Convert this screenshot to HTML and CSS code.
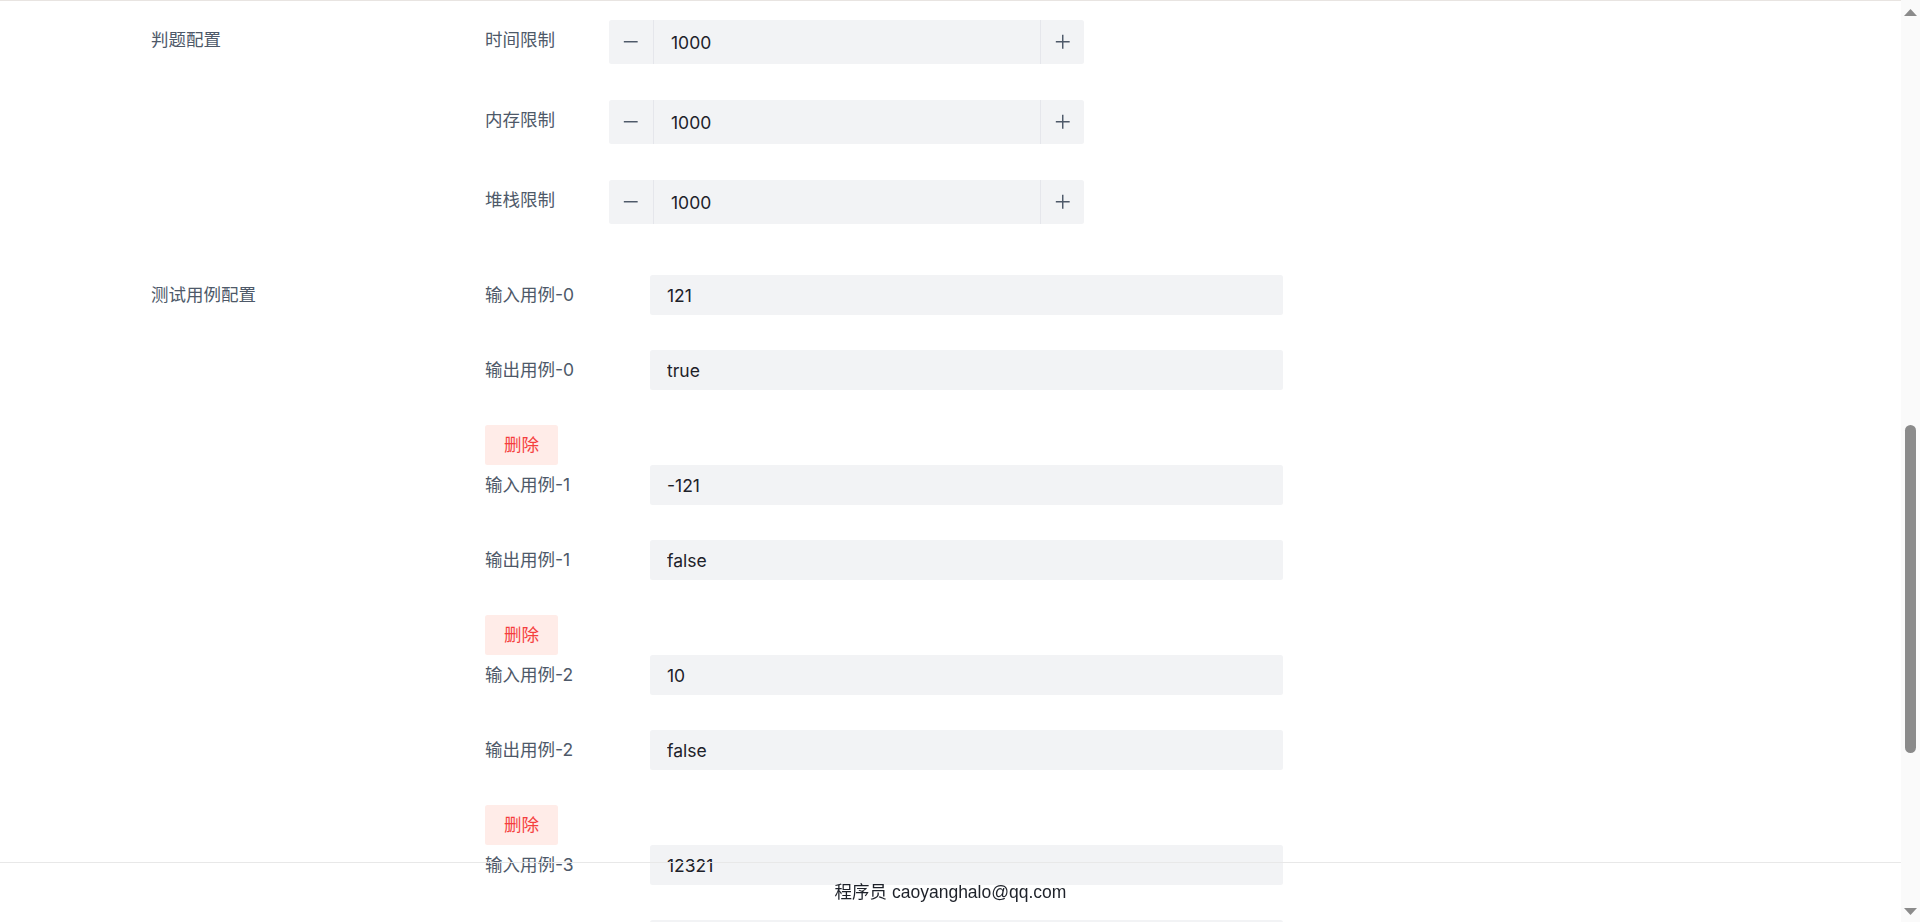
FILE: index.html
```html
<!DOCTYPE html>
<html lang="zh-CN">
<head>
<meta charset="utf-8">
<title>创建题目</title>
<link rel="stylesheet" href="styles.css">
</head>
<body>
<div class="app">
  <main class="main">
    <form class="form">
      <div class="rule"></div>

      <section class="group judge">
        <div class="group-label">判题配置</div>
        <div class="group-body">
          <div class="sub-item">
            <label class="sub-label">时间限制</label>
            <div class="input-number">
              <button type="button" class="step minus"><svg viewBox="0 0 48 48" class="icon"><path d="M5 24h38"/></svg></button>
              <input type="text" value="1000">
              <button type="button" class="step plus"><svg viewBox="0 0 48 48" class="icon"><path d="M5 24h38M24 5v38"/></svg></button>
            </div>
          </div>
          <div class="sub-item">
            <label class="sub-label">内存限制</label>
            <div class="input-number">
              <button type="button" class="step minus"><svg viewBox="0 0 48 48" class="icon"><path d="M5 24h38"/></svg></button>
              <input type="text" value="1000">
              <button type="button" class="step plus"><svg viewBox="0 0 48 48" class="icon"><path d="M5 24h38M24 5v38"/></svg></button>
            </div>
          </div>
          <div class="sub-item">
            <label class="sub-label">堆栈限制</label>
            <div class="input-number">
              <button type="button" class="step minus"><svg viewBox="0 0 48 48" class="icon"><path d="M5 24h38"/></svg></button>
              <input type="text" value="1000">
              <button type="button" class="step plus"><svg viewBox="0 0 48 48" class="icon"><path d="M5 24h38M24 5v38"/></svg></button>
            </div>
          </div>
        </div>
      </section>

      <section class="group cases">
        <div class="group-label">测试用例配置</div>
        <div class="group-body">
          <div class="sub-item">
            <label class="sub-label">输入用例-0</label>
            <div class="input"><input type="text" value="121"></div>
          </div>
          <div class="sub-item">
            <label class="sub-label">输出用例-0</label>
            <div class="input"><input type="text" value="true"></div>
          </div>
          <div class="sub-item delete-row"><button type="button" class="btn btn-danger">删除</button></div>

          <div class="sub-item">
            <label class="sub-label">输入用例-1</label>
            <div class="input"><input type="text" value="-121"></div>
          </div>
          <div class="sub-item">
            <label class="sub-label">输出用例-1</label>
            <div class="input"><input type="text" value="false"></div>
          </div>
          <div class="sub-item delete-row"><button type="button" class="btn btn-danger">删除</button></div>

          <div class="sub-item">
            <label class="sub-label">输入用例-2</label>
            <div class="input"><input type="text" value="10"></div>
          </div>
          <div class="sub-item">
            <label class="sub-label">输出用例-2</label>
            <div class="input"><input type="text" value="false"></div>
          </div>
          <div class="sub-item delete-row"><button type="button" class="btn btn-danger">删除</button></div>

          <div class="sub-item">
            <label class="sub-label">输入用例-3</label>
            <div class="input"><input type="text" value="12321"></div>
          </div>
          <div class="sub-item last-visible">
            <div class="input input-peek"></div>
          </div>
        </div>
      </section>
    </form>
  </main>

  <footer class="footer">程序员 caoyanghalo@qq.com</footer>

  <div class="scrollbar" aria-hidden="true">
    <div class="sb-button sb-up"><svg class="sb-arrow" width="13" height="7" viewBox="0 0 13 7"><path d="M6.5 0L13 7H0z"/></svg></div>
    <div class="sb-track"><div class="sb-thumb"></div></div>
    <div class="sb-button sb-down"><svg class="sb-arrow" width="13" height="7" viewBox="0 0 13 7"><path d="M0 0H13L6.5 7z"/></svg></div>
  </div>
</div>
</body>
</html>
```

FILE: styles.css
```css
* { box-sizing: border-box; }

html, body { height: 100%; }

body {
  margin: 0;
  font-family: Inter, "Noto Sans CJK SC", sans-serif;
  font-size: 17.5px;
  color: #1d2129;
  background: #ffffff;
  overflow: hidden;
}

.main { padding: 0; }
.form { margin: 0; }

.rule { height: 1px; background: #e8e4e1; }

.input {
  width: 633px;
  height: 40px;
  flex: none;
  display: flex;
  align-items: center;
  padding: 0 17px;
  background: #f2f3f5;
  border-radius: 2.5px;
}
.input input,
.input-number input {
  border: 0;
  outline: none;
  background: transparent;
  font: inherit;
  color: #1d2129;
  width: 100%;
  padding: 0;
}

.group {
  display: flex;
  align-items: flex-start;
  padding-left: 151px;
}
.group-label {
  width: 334px;
  flex: none;
  line-height: 40px;
  color: #4e5969;
}
.group-body { display: flex; flex-direction: column; }
.judge { padding-top: 19px; }
.cases { margin-top: 15px; }

.sub-item { display: flex; align-items: flex-start; }
.sub-label {
  flex: none;
  line-height: 40px;
  color: #4e5969;
}
.judge .sub-item { margin-bottom: 36px; }
.judge .sub-label { width: 124px; }
.cases .sub-item { margin-bottom: 35px; }
.cases .sub-label { width: 165px; }
.cases .delete-row { margin-bottom: 0; }
.cases .last-visible { padding-left: 165px; margin-bottom: 0; }

.input-number {
  width: 475px;
  height: 44px;
  display: flex;
  background: #f2f3f5;
  border-radius: 2.5px;
}
.input-number input { flex: 1; min-width: 0; padding: 0 17px; }
.step {
  flex: none;
  width: 44px;
  display: flex;
  align-items: center;
  justify-content: center;
  padding: 0;
  border: 0;
  background: transparent;
  color: #4e5969;
  cursor: pointer;
}
.step.minus { width: 45px; border-right: 1px solid #e5e6eb; }
.step.plus { border-left: 1px solid #e5e6eb; }
.icon {
  width: 17.5px;
  height: 17.5px;
  fill: none;
  stroke: currentColor;
  stroke-width: 4;
}

.btn {
  height: 40px;
  padding: 0 19px;
  border: 0;
  border-radius: 2.5px;
  font: inherit;
  line-height: 40px;
  cursor: pointer;
}
.btn-danger { background: #ffece8; color: #f53f3f; }

.footer {
  position: fixed;
  left: 0;
  right: 19px;
  bottom: 0;
  height: 60px;
  border-top: 1px solid #e8e8e8;
  text-align: center;
  line-height: 59px;
  color: #1d2129;
  font-family: "Liberation Sans", "Noto Sans CJK SC", sans-serif;
}

/* browser scrollbar */
.scrollbar {
  position: fixed;
  top: 0;
  right: 0;
  bottom: 0;
  width: 19px;
  background: #fafafa;
  display: flex;
  flex-direction: column;
}
.sb-button {
  height: 19px;
  flex: none;
  display: flex;
  justify-content: center;
}
.sb-up { align-items: flex-end; padding-bottom: 3px; }
.sb-down { align-items: flex-start; padding-top: 5px; }
.sb-arrow { display: block; fill: #8b8b8b; }
.sb-track { flex: 1; padding: 406px 4px 0; }
.sb-thumb {
  height: 328px;
  background: #8b8b8b;
  border-radius: 5.5px;
}
```
